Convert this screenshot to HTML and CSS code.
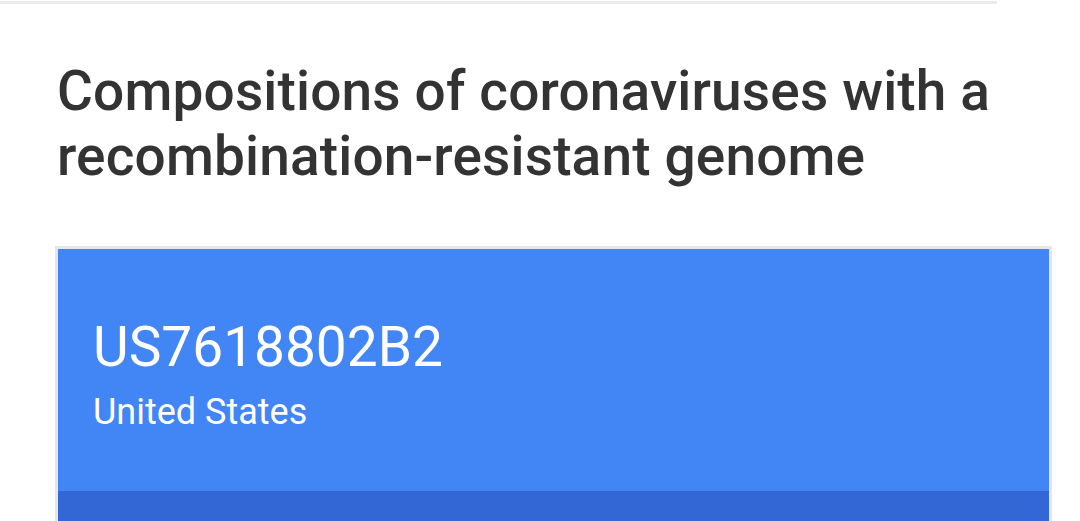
FILE: index.html
```html
<!DOCTYPE html>
<html lang="en">
<head>
  <meta charset="UTF-8" />
  <meta name="viewport" content="width=device-width, initial-scale=1.0" />
  <title>Compositions of coronaviruses with a recombination-resistant genome</title>
  <link rel="stylesheet" href="styles.css">
</head>
<body>
  <div class="top-rule"></div>

  <div class="content">
    <h1 class="title">Compositions of coronaviruses with a recombination-resistant genome</h1>

    <div class="patent-card">
      <div class="patent-head">
        <div class="patent-number">US7618802B2</div>
        <div class="patent-country">United States</div>
      </div>
      <div class="patent-band"></div>
    </div>
  </div>
</body>
</html>
```

FILE: styles.css
```css
body {
  margin: 0;
  font-family: Roboto, "Liberation Sans", sans-serif;
  background-color: #fff;
  color: #333;
}
.top-rule {
  width: 997px;
  height: 3px;
  margin-top: 1px;
  background-color: #ebebeb;
}
.content {
  padding: 0 28px 0 55px;
}
.title {
  margin: 0;
  padding: 55px 0 0 2px;
  font-size: 55px;
  font-weight: 500;
  line-height: 65px;
  letter-spacing: 0.15px;
  color: #333;
}
.patent-card {
  margin-top: 57px;
  border: 3px solid #e6e6e6;
  border-bottom: none;
}
.patent-head {
  background-color: #4285f4;
  color: #fff;
  padding: 68px 35px 59px;
}
.patent-number {
  font-size: 55px;
  line-height: 60px;
}
.patent-country {
  font-size: 36px;
  line-height: 40px;
  margin-top: 15px;
}
.patent-band {
  height: 40px;
  background-color: #3367d6;
}
```
